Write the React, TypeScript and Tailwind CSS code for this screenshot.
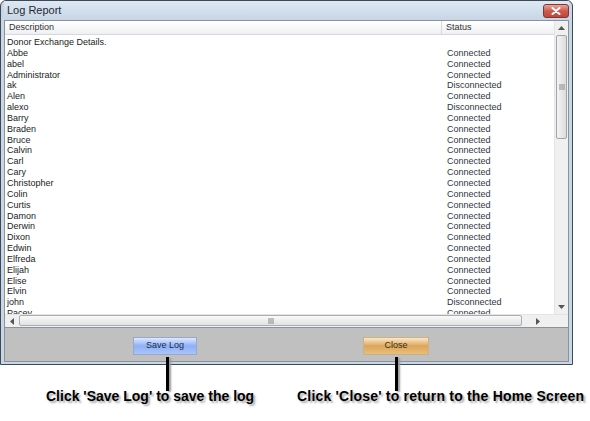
import React from "react";

const rows: [string, string][] = [
  ["Donor Exchange Details.", ""],
  ["Abbe", "Connected"],
  ["abel", "Connected"],
  ["Administrator", "Connected"],
  ["ak", "Disconnected"],
  ["Alen", "Connected"],
  ["alexo", "Disconnected"],
  ["Barry", "Connected"],
  ["Braden", "Connected"],
  ["Bruce", "Connected"],
  ["Calvin", "Connected"],
  ["Carl", "Connected"],
  ["Cary", "Connected"],
  ["Christopher", "Connected"],
  ["Colin", "Connected"],
  ["Curtis", "Connected"],
  ["Damon", "Connected"],
  ["Derwin", "Connected"],
  ["Dixon", "Connected"],
  ["Edwin", "Connected"],
  ["Elfreda", "Connected"],
  ["Elijah", "Connected"],
  ["Elise", "Connected"],
  ["Elvin", "Connected"],
  ["john", "Disconnected"],
  ["Pacey", "Connected"],
];

export default function App() {
  return (
    <div className="relative w-[590px] h-[421px] bg-white overflow-hidden font-['Liberation_Sans',Arial,sans-serif]">
      {/* window */}
      <div className="w-[573px] h-[365px] border border-[#3c4a58] rounded-t-[6px] bg-[#c8d6e5] flex flex-col px-[3px] pb-[2px]">
        <div className="h-[18px] flex items-center justify-between pl-[3px] bg-gradient-to-b from-[#dfe9f4] to-[#c8d6e5]">
          <span className="text-[11px] text-[#1e2a36]">Log Report</span>
          <div className="w-[26px] h-[14px] mt-[1px] rounded-[3px] border border-[#7a3a36] bg-gradient-to-b from-[#e8a49c] via-[#cf5a4e] to-[#c24538] flex items-center justify-center">
            <svg width="10" height="8" viewBox="0 0 10 8">
              <path d="M1.5 1 L8.5 7 M8.5 1 L1.5 7" stroke="white" strokeWidth="2" strokeLinecap="round" />
            </svg>
          </div>
        </div>

        <div className="mt-[1px] h-[308px] border border-[#8a929a] bg-white flex flex-col">
          <div className="flex flex-1 min-h-0">
            <div className="flex-1 flex flex-col min-w-0">
              <div className="h-[14px] flex text-[9px] text-[#333] bg-gradient-to-b from-[#ffffff] to-[#eef0f3] border-b border-[#d5d9de]">
                <div className="w-[437px] pl-[4px] flex items-center border-r border-[#d5d9de]">Description</div>
                <div className="flex-1 pl-[4px] flex items-center">Status</div>
              </div>
              <div className="pt-[2px] text-[9px] text-[#222] overflow-hidden">
                {rows.map(([d, s], i) => (
                  <div key={i} className="h-[10.85px] leading-[10.85px] flex">
                    <div className="w-[437px] pl-[2px] whitespace-nowrap">{d}</div>
                    <div className="flex-1 pl-[5px] whitespace-nowrap text-[#2e3642]">{s}</div>
                  </div>
                ))}
              </div>
            </div>
            {/* vertical scrollbar */}
            <div className="w-[14px] bg-[#f0f0f0] border-l border-[#e4e4e4] flex flex-col items-center">
              <div className="h-[14px] flex items-center justify-center">
                <svg width="7" height="4" viewBox="0 0 7 4"><path d="M0 4 L3.5 0 L7 4 Z" fill="#555" /></svg>
              </div>
              <div className="w-[11px] h-[104px] rounded-[2px] border border-[#9fa5ab] bg-gradient-to-r from-[#f4f4f4] to-[#dcdcdc] flex items-center justify-center">
                <svg width="6" height="6" viewBox="0 0 6 6"><path d="M0 1H6M0 3H6M0 5H6" stroke="#888" strokeWidth="1" /></svg>
              </div>
              <div className="flex-1" />
              <div className="h-[14px] flex items-center justify-center">
                <svg width="7" height="4" viewBox="0 0 7 4"><path d="M0 0 L3.5 4 L7 0 Z" fill="#555" /></svg>
              </div>
            </div>
          </div>
          {/* horizontal scrollbar */}
          <div className="h-[13px] flex bg-[#f0f0f0] border-t border-[#e4e4e4]">
            <div className="w-[14px] flex items-center justify-center">
              <svg width="4" height="7" viewBox="0 0 4 7"><path d="M4 0 L0 3.5 L4 7 Z" fill="#555" /></svg>
            </div>
            <div className="w-[503px] h-[11px] rounded-[2px] border border-[#a9aeb3] bg-gradient-to-b from-[#fafafa] to-[#e2e2e2] flex items-center justify-center">
              <svg width="6" height="6" viewBox="0 0 6 6"><path d="M1 0V6M3 0V6M5 0V6" stroke="#888" strokeWidth="1" /></svg>
            </div>
            <div className="flex-1 flex items-center justify-center">
              <svg width="4" height="7" viewBox="0 0 4 7"><path d="M0 0 L4 3.5 L0 7 Z" fill="#555" /></svg>
            </div>
            <div className="w-[14px] bg-[#f0f0f0]" />
          </div>
        </div>

        <div className="flex-1 bg-[#c0c0c0] border border-[#8a929a] border-t-0 flex items-start pt-[9px]">
          <button className="ml-[128px] w-[64px] h-[18px] text-[9px] text-[#1c2c4c] border border-[#9aa8c8] bg-gradient-to-b from-[#dfe8ff] via-[#8fb0f6] to-[#a9c4fb]">
            Save Log
          </button>
          <button className="ml-[166px] w-[66px] h-[18px] text-[9px] text-[#3a2a10] border border-[#c8b088] bg-gradient-to-b from-[#fbe9c6] via-[#dca65a] to-[#e7bf7a]">
            Close
          </button>
        </div>
      </div>

      {/* annotations */}
      <div className="absolute left-[166px] top-[357px] w-[3px] h-[34px] bg-black shadow-[2px_1px_2px_#999]" />
      <div className="absolute left-[395px] top-[357px] w-[3px] h-[34px] bg-black shadow-[2px_1px_2px_#999]" />
      <div className="flex mt-[21px] text-[14px] font-bold text-black [text-shadow:2px_2px_2px_#aaa]">
        <div className="ml-[46px] w-[251px] whitespace-nowrap">Click 'Save Log' to save the log</div>
        <div className="whitespace-nowrap tracking-[0.2px]">Click 'Close' to return to the Home Screen</div>
      </div>
    </div>
  );
}
